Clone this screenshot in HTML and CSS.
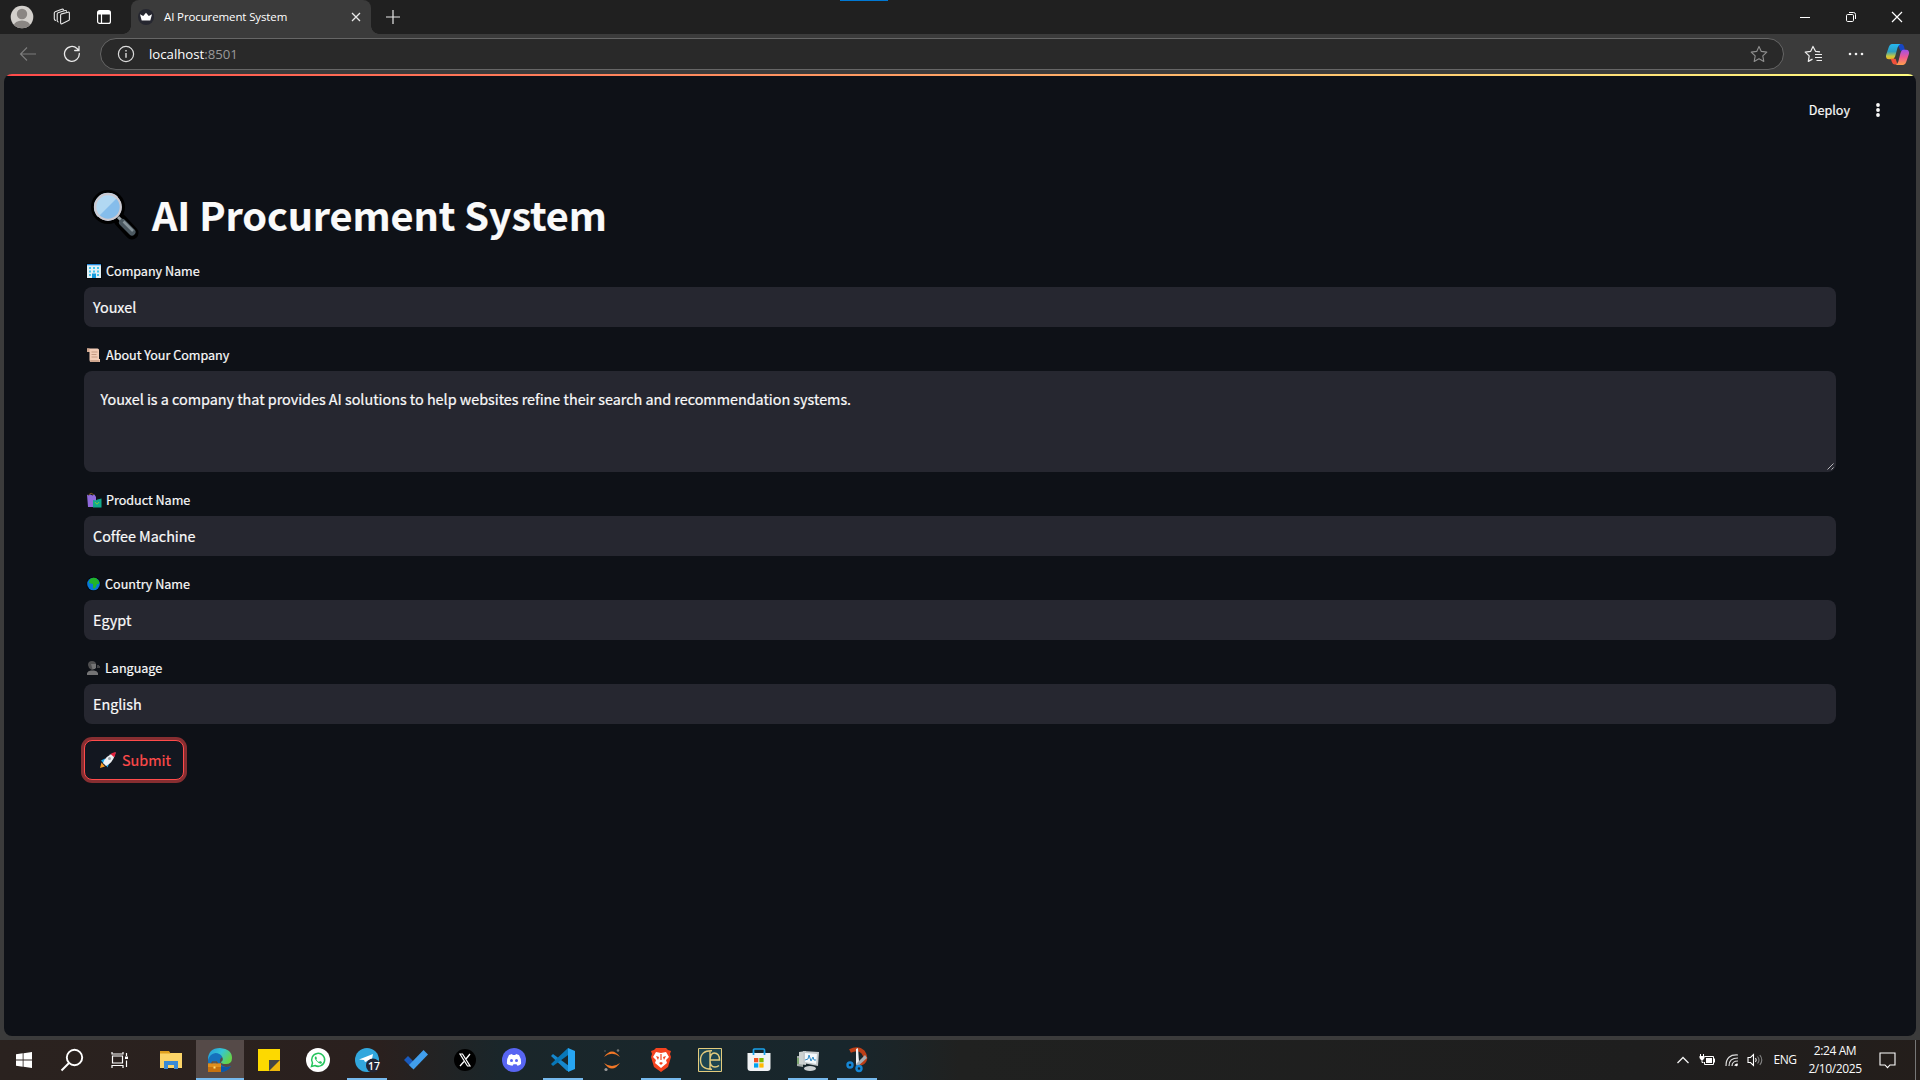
FILE: index.html
```html
<!DOCTYPE html>
<html lang="en">
<head>
<meta charset="utf-8">
<title>AI Procurement System</title>
<link rel="stylesheet" href="styles.css">
</head>
<body>
<div class="browser">
  <header class="tabbar">
    <div class="slot avatar"><svg width="24" height="24" viewBox="0 0 24 24"><defs><clipPath id="av"><circle cx="12" cy="12" r="11.3"/></clipPath></defs><g clip-path="url(#av)"><rect width="24" height="24" fill="#d3d0cc"/><circle cx="12" cy="9" r="5.2" fill="#8a8683"/><ellipse cx="12" cy="21" rx="8.2" ry="5.5" fill="#8a8683"/></g></svg></div>
    <div class="slot spaces"><svg width="18" height="18" viewBox="0 0 18 18" fill="none" stroke="#e6e6e6" stroke-width="1.1" stroke-linejoin="round" stroke-linecap="round"><path d="M7.600 7.200q0-1 1-1.300L15 4.200q1.400-.3 1.400 1v6q0 1-.9 1.300L9 15.800q-1.400.4-1.400-1z"/><path d="M5.300 14q-1.200-.2-1.100-1.400V6q0-1 .9-1.300L12 2.500q1.300-.3 1.500.8M2.600 12.400q-1.400-.2-1.300-1.500V5q0-1 .9-1.300l6.600-2.500q1.300-.4 1.700.5"/></svg></div>
    <div class="slot vtabs"><svg width="16" height="16" viewBox="0 0 16 16" fill="none"><rect x="1.600" y="1.600" width="12.800" height="12.800" rx="2" stroke="#fff" stroke-width="1.200"/><path d="M2 2h12v3.500H2z" fill="#fff"/><path d="M5.500 5v9" stroke="#fff" stroke-width="1.200"/></svg></div>
    <div class="tab">
      <svg class="favicon" width="16" height="16" viewBox="0 0 16 16"><circle cx="8" cy="8" r="8" fill="#262730"/><path d="M2 5.300 5.200 7 8 3.800 10.800 7 14 5.300 12.300 11.500H3.700z" fill="#fff"/></svg>
      <span class="tab-title">AI Procurement System</span>
      <svg class="tab-close" width="10" height="10" viewBox="0 0 10 10" stroke="#e8e8e8" stroke-width="1.300"><path d="m1 1 8 8M9 1 1 9"/></svg>
    </div>
    <svg class="newtab" width="16" height="16" viewBox="0 0 16 16" stroke="#e8e8e8" stroke-width="1.200"><path d="M8 1v14M1 8h14"/></svg>
    <div class="window-buttons">
      <svg width="12" height="12" viewBox="0 0 12 12" stroke="#fff"><path d="M1 6.500h10"/></svg>
      <svg width="12" height="12" viewBox="0 0 12 12" fill="none" stroke="#fff"><rect x="1.500" y="3.500" width="7" height="7" rx="1.200"/><path d="M4 1.500h4.500q2 0 2 2V8"/></svg>
      <svg width="12" height="12" viewBox="0 0 12 12" stroke="#fff" stroke-width="1.200"><path d="m1 1 10 10M11 1 1 11"/></svg>
    </div>
    <i class="top-accent"></i>
  </header>
  <nav class="toolbar">
    <svg class="back" width="18" height="16" viewBox="0 0 18 16" fill="none" stroke="#7d7d7d" stroke-width="1.100"><path d="M17 8H1.500M8 1.500 1.500 8 8 14.500"/></svg>
    <svg class="reload" width="18" height="18" viewBox="0 0 18 18" fill="none" stroke="#e8e8e8" stroke-width="1.300" stroke-linecap="round"><path d="M16.300 8.500a7.400 7.400 0 1 1-2.300-5L16 5.500M16 1.300v4.200h-4.300"/></svg>
    <div class="address">
      <svg width="18" height="18" viewBox="0 0 18 18" fill="none" stroke="#dcdcdc" stroke-width="1.200"><circle cx="9" cy="9" r="7.600"/><path d="M9 8v4.800M9 5v1.600" stroke-width="1.400"/></svg>
      <span class="url">localhost<span>:8501</span></span>
      <svg class="star" width="18" height="18" viewBox="0 0 18 18" fill="none" stroke="#8f8f8f" stroke-width="1.100" stroke-linejoin="round"><path d="m9 1.400 2.300 5 5.500.7-4 3.800 1 5.500L9 13.700l-4.800 2.700 1-5.500-4-3.800 5.500-.700z"/></svg>
    </div>
    <svg class="favorites" width="18" height="18" viewBox="0 0 18 18" fill="none" stroke="#eee" stroke-width="1.200" stroke-linejoin="round"><path d="M16 6.800 11.500 6.300 9 1.400 6.700 6.300l-5.500.8 4 3.800-.9 5.500 4.200-2.300M11 9.500h7M11 12.500h7M12.500 15.500h5.500"/></svg>
    <svg class="more" width="16" height="6" viewBox="0 0 16 6" fill="#f2f2f2"><circle cx="2" cy="3" r="1.300"/><circle cx="8" cy="3" r="1.300"/><circle cx="14" cy="3" r="1.300"/></svg>
    <svg class="copilot" width="23" height="21" viewBox="0 0 24 22"><defs><linearGradient id="c1" x1="0" y1="0" x2="0" y2="1"><stop stop-color="#25b7f0"/><stop offset=".5" stop-color="#2f9fc0"/><stop offset=".8" stop-color="#c8c840"/><stop offset="1" stop-color="#f0b020"/></linearGradient><linearGradient id="c2" x1="0" y1="0" x2="0" y2="1"><stop stop-color="#a050e8"/><stop offset=".5" stop-color="#f05a90"/><stop offset="1" stop-color="#ffa04a"/></linearGradient></defs><path d="M12 0h4q2 0 2.700 2.300L20 7h-5z" fill="#1746c4"/><path d="M6 0h9q-2 1-3 4L9.500 13Q8.500 16 6 16H3q-4 0-2.800-5L3 3q1-3 3-3z" fill="url(#c1)"/><path d="M5 15.500h5l2 6H9q-2 0-3-3z" fill="#f0503a"/><path d="M18 6h3q4 0 2.800 5L21 19q-1 3-3 3H10q2-1 3-4l2-8q1-4 3-4z" fill="url(#c2)"/></svg>
  </nav>

  <main class="page">
    <div class="app-header"><span>Deploy</span><svg width="6" height="16" viewBox="0 0 6 16" fill="#fafafa"><circle cx="3" cy="3" r="1.900"/><circle cx="3" cy="8" r="1.900"/><circle cx="3" cy="13" r="1.900"/></svg></div>
    <form class="form">
      <h1><svg width="48" height="50" viewBox="0 0 48 50"><g fill="none" stroke="#000" stroke-linecap="round"><circle cx="17" cy="17" r="12" stroke-width="10"/><path d="M29 30 41 43" stroke-width="13"/></g><path d="m27 27 5 5" stroke="#9aa5aa" stroke-width="3"/><path d="M31.500 32.500 41 42" stroke="#4b5860" stroke-width="7" stroke-linecap="round"/><path d="m32.500 31.500 9.500 9.500" stroke="#87949a" stroke-width="2.500"/><circle cx="17" cy="17" r="13.500" fill="#85bdeb"/><path d="M7 27A13.500 13.500 0 0 1 27 7z" fill="#b1d8f2"/><circle cx="17" cy="17" r="12.800" fill="none" stroke="#ccc9cf" stroke-width="2.200"/></svg><span>AI Procurement System</span></h1>

      <label class="field-label"><svg width="16" height="16" viewBox="0 0 16 16"><path d="M0 0h16v16H0z" fill="#07090c"/><path d="M1 1h14v14H1z" fill="#e2f0f5"/><path d="M1 1h14v1.300H1z" fill="#2489dc"/><g fill="#43c5ee"><path d="M3 4h2v2H3zM7 4h2v2H7zM11 4h2v2h-2zM3 7.500h2v2H3zM7 7.500h2v2H7zM11 7.500h2v2h-2zM3 11h2v2H3zM11 11h2v2h-2z"/></g><path d="M6 10.500h4V15H6z" fill="#159bdc"/></svg><span>Company Name</span></label>
      <div class="input">Youxel</div>

      <label class="field-label"><svg width="16" height="16" viewBox="0 0 16 16"><path d="M1 1.500h10.500q1.500 0 1.500 1.500v9h1v3H5q-1.500 0-1.500-2V5H1z" fill="#f3cdb7"/><path d="M1 1.500h2.500V5H1zM4 13h9.500v2H5z" fill="#cfa68e"/><path d="M5.500 5h6M5.500 7.500h5M5.500 10h6" stroke="#b98d76" stroke-width=".8"/></svg><span>About Your Company</span></label>
      <div class="input textarea">Youxel is a company that provides AI solutions to help websites refine their search and recommendation systems.<svg class="grip" width="7" height="7" viewBox="0 0 7 7" stroke="#c8c8cc" stroke-width=".9"><path d="M.5 6.500l6-6M4.500 6.500l2-2"/></svg></div>

      <label class="field-label"><svg width="16" height="16" viewBox="0 0 16 16"><path d="M3 4V2.500q2-2.500 4.500 0V5" fill="none" stroke="#80601e" stroke-width="1"/><path d="m1 2.500 1.500 1 2-1 2 1 2-1 1.500 2.500V15H2z" fill="#8f6adb"/><path d="m7 8 2.500.5 2-1 4-1v9H7z" fill="#10a98c"/><path d="M9 10q2 4 4 0" fill="none" stroke="#82c83c" stroke-width="1"/></svg><span>Product Name</span></label>
      <div class="input">Coffee Machine</div>

      <label class="field-label"><svg width="16" height="16" viewBox="0 0 16 16"><circle cx="7.500" cy="8" r="7.300" fill="#080a0e"/><circle cx="7.500" cy="8" r="6.300" fill="#0878d8"/><path d="M4 3q3-2 6-1l3 3v3l-2 0-1 3-2 2-1-1V8L3 7z" fill="#21b52a"/></svg><span class="tight">Country Name</span></label>
      <div class="input">Egypt</div>

      <label class="field-label"><svg width="16" height="16" viewBox="0 0 16 16"><path d="M2 5q0-4 4-4t4 3.500q0 4-2.500 5L6 10 3 8z" fill="#4f4f50"/><path d="M5 4h5v3.500L9 9H6.500z" fill="#747475"/><path d="M1 15v-2q1-2.500 4-2.500h3q3 0 4 2.500v2z" fill="#747475"/><path d="M12 5v3m1.500-1.500v1" stroke="#777" stroke-width="1"/></svg><span class="tight">Language</span></label>
      <div class="input">English</div>

      <button class="submit" type="button"><svg width="18" height="18" viewBox="0 0 18 18"><path d="m1 17 1.500-5.500L6 15.500z" fill="#f59a22"/><path d="m2 9.500 4-2 3 4-4 1.500zM8.500 16.500l2-5-1.500-2-3 3z" fill="#18a5e8"/><path d="M4 12Q6.500 4.500 16.500 1.500 14.500 11.500 7 15z" fill="#edf0f3"/><path d="M16.800 1q-.3 3-1.600 5.300L11.500 3Q13.800 1.500 16.800 1z" fill="#e4213d"/><circle cx="10.500" cy="7.500" r="1.500" fill="#9aa3ab"/></svg><span>Submit</span></button>
    </form>
  </main>
</div>

<footer class="taskbar">
  <div class="system-icons">
    <span><svg width="16" height="16" viewBox="0 0 16 16" fill="#fff"><path d="m0 2.300 6.700-1v6.300H0zM7.500 1.200 16 0v7.600H7.500zM0 8.400h6.700v6.300L0 13.700zM7.500 8.400H16V16l-8.500-1.200z"/></svg></span>
    <span><svg width="24" height="24" viewBox="0 0 24 24" fill="none" stroke="#fff" stroke-width="1.900"><circle cx="14.500" cy="9.500" r="7.700"/><path d="M9 15 1.500 22.500"/></svg></span>
    <span><svg width="18" height="18" viewBox="0 0 18 18" fill="none" stroke="#fff" stroke-width="1.200"><path d="M1.500 5h10v7h-10zM1 1v2h11V1M1 17v-2.500h11V17M15.500 2v3M15.500 9.500V16"/><path d="M14 5.500h3v2.500h-3z" fill="#fff" stroke="none"/></svg></span>
  </div>
  <div class="apps">
    <span><svg width="24" height="24" viewBox="0 0 24 24"><path d="M1 3h8l2 2H1z" fill="#d99a13"/><path d="M1 5h22v15H1z" fill="#fbd468"/><path d="M1 3h9l1.500 2.500H1z" fill="#dfa01f"/><path d="M5 21v-8h14v8h-4v-4H9v4z" fill="#3a8ad6"/></svg></span>
    <span class="active"><svg width="26" height="26" viewBox="0 0 26 26"><defs><linearGradient id="ed" x1="0" y1="0" x2="1" y2=".5"><stop stop-color="#2496dc"/><stop offset=".55" stop-color="#35c6d4"/><stop offset="1" stop-color="#64d34c"/></linearGradient></defs><path d="M1 13q0-8 8-8 7 0 8 5-4 0-4 4 0 5 6 6 3 0 5-1-4 6-11 6Q1 25 1 13z" fill="#1671bd"/><path d="M1 13Q1 1 13 1q12 1 12 10 0 6-6 6-5 0-5-2 3-1.500 1-5.500Q13 6 8.500 6 3 6.500 1 13z" fill="url(#ed)"/><path d="M11 16q4 6 13 3.500Q20 25 13 25z" fill="#0c56a6"/><path d="M1 16.500h13V25H1z" fill="#c7720f"/><path d="M1 16.500h13V20H1z" fill="#df8f1e"/><path d="M5 16.500V15h5v1.500" fill="none" stroke="#8a4708"/><path d="M6.500 19.500h2v2h-2z" fill="#ffe07a"/></svg></span>
    <span><svg width="24" height="24" viewBox="0 0 24 24"><path d="M1 1h22v11L12 23H1z" fill="#fdd900"/><path d="M12 12h11v11H12z" fill="#efb90c"/><path d="M12 12h11L12 23z" fill="#454545"/></svg></span>
    <span><svg width="26" height="26" viewBox="0 0 26 26"><circle cx="13" cy="13" r="12" fill="#fff"/><path d="m6.500 19.500 1-3.500a6.500 6.500 0 1 1 2.500 2.500z" fill="none" stroke="#25c45c" stroke-width="1.500"/><path d="M10.500 9.500q-2 1 1 4.500t5 2.500l.5-1.500-2-1-1 1q-2-.5-2.700-2.700l.7-1-1-2z" fill="#25c45c"/></svg></span>
    <span class="open"><svg width="26" height="26" viewBox="0 0 26 26"><circle cx="13" cy="13" r="12" fill="#32a7dd"/><path d="m5 12.500 14-5.500-1 5-7 3-1-2z" fill="#fff"/><circle cx="19" cy="18.500" r="7" fill="#232534"/></svg><b class="badge">17</b></span>
    <span><svg width="26" height="26" viewBox="0 0 26 26"><path d="m1 13 4-4 7 7-3 5z" fill="#195abd"/><path d="M20.500 3 25 7.500 10.500 22.500 6 18z" fill="#419fed"/></svg></span>
    <span><svg width="24" height="24" viewBox="0 0 24 24"><circle cx="12" cy="12" r="11" fill="#000"/><path d="M7 6h2.500L17 18h-2.500z" fill="none" stroke="#fff" stroke-width="1.200"/><path d="m17 6-4 5M11 13.500 7 18" stroke="#fff" stroke-width="1.300"/></svg></span>
    <span><svg width="26" height="26" viewBox="0 0 26 26"><circle cx="13" cy="13" r="12" fill="#5865f2"/><path d="m8 8 3-1 .7 1h2.600l.7-1 3 1q2.500 4 2 9-2 1.500-3.500 1.700l-1-1.500h-3l-1 1.500Q8 18.500 6 17q-.5-5 2-9z" fill="#fff"/><circle cx="10.500" cy="13.500" r="1.500" fill="#5865f2"/><circle cx="15.500" cy="13.500" r="1.500" fill="#5865f2"/></svg></span>
    <span class="open"><svg width="26" height="26" viewBox="0 0 26 26"><path d="m1 9 2-2 16 12v5l-2 0z" fill="#1687cd"/><path d="M1 17 18 1l1.500 6L3 19z" fill="#0877b8"/><path d="m18 1 7 3v18l-7 3z" fill="#27a5f2"/></svg></span>
    <span><svg width="24" height="24" viewBox="0 0 24 24"><path d="M4 9Q12-2 20 9 12 2.500 4 9zM4 15q8 11 16 0-8 6-16 0z" fill="#f37726"/><circle cx="18" cy="2.500" r="1.300" fill="#777"/><circle cx="6" cy="21.500" r="1.600" fill="#999"/><circle cx="5" cy="3" r=".8" fill="#666"/></svg></span>
    <span class="open"><svg width="26" height="26" viewBox="0 0 26 26"><path d="m8 1 10 0 2 2 3 1-1 3 1 3-3 10-7 5-7-5L3 10l1-3-1-3 3-1z" fill="#f4431f"/><path d="m8 5 5 1 5-1 3 5-3 3 1 3-6 5-6-5 1-3-3-3z" fill="#fff"/><path d="m8 9 3 1-1 3zM18 9l-3 1 1 3zM11 16l2-1 2 1-2 2zM12.400 7h1.200v6h-1.200z" fill="#f4431f"/></svg></span>
    <span><svg width="24" height="24" viewBox="0 0 24 24" fill="none" stroke="#e4cb7c"><path d="M.5.500h23v23H.5z" fill="#1e4550"/><path d="M14 2.800Q2.500 2.500 2.500 12T14 21.200M12 3v18M12 12h9.500q0-7-5.500-7-3.500 0-4 7 0 7 5 7 2.500 0 4-1.500" stroke-width="1.400"/></svg></span>
    <span><svg width="24" height="24" viewBox="0 0 24 24"><path d="M6.500 6V2q0-1 1-1h9q1 0 1 1v4" fill="none" stroke="#1aa2eb" stroke-width="1.700"/><path d="M.5 5h23v15q0 3-3 3h-17q-3 0-3-3z" fill="#f1f3f5"/><path d="M7 10h4.300v4.300H7z" fill="#f25022"/><path d="M12.300 10h4.300v4.300h-4.300z" fill="#7fba00"/><path d="M7 15.300h4.300v4.300H7z" fill="#00a4ef"/><path d="M12.300 15.300h4.300v4.300h-4.300z" fill="#ffb900"/><path d="M6.500 4.500v2.500M17.500 4.500v2.500" stroke="#1aa2eb" stroke-width="1.700"/></svg></span>
    <span class="open"><svg width="24" height="24" viewBox="0 0 24 24"><path d="M1 8h6v11l-6-1z" fill="#a3aaa8"/><path d="m3 4 7-1v14l-7-1z" fill="#cdd2d1"/><path d="m7 3 16 1-1 14-15-3z" fill="#c5cacc"/><path d="m9 5 12 1-1 10-11-2z" fill="#f4f9fc"/><path d="m9 12 3-1 1-4 2 6 2-4 1 3 2 0" fill="none" stroke="#308bc7"/><ellipse cx="14" cy="20.500" rx="6" ry="2.500" fill="#cbd0d2"/><path d="M2 10v6" stroke="#58a03b"/></svg></span>
    <span class="open"><svg width="24" height="26" viewBox="0 0 24 26"><path d="M5 4q8-4 13 1 5 7-1 11l-3 1" fill="none" stroke="#bd3e16" stroke-width="4"/><path d="m13 1 1 14-3 3V2z" fill="#edf0f3"/><path d="m20 8-9 9 1 3 10-9z" fill="#a6abb0"/><circle cx="5" cy="18" r="2.500" fill="none" stroke="#1687d6" stroke-width="2.400"/><circle cx="14" cy="21.500" r="2.500" fill="none" stroke="#1687d6" stroke-width="2.400"/></svg></span>
  </div>
  <div class="tray">
    <span class="t24"><svg width="14" height="8" viewBox="0 0 14 8" fill="none" stroke="#f2f2f2" stroke-width="1.300"><path d="m1.500 7 5.500-5.500L12.500 7"/></svg></span>
    <span class="t24"><svg width="17" height="12" viewBox="0 0 17 12" fill="none" stroke="#fff"><path d="M5.500 2.500h9v8h-9V8M15.500 4.500v4"/><path d="M7 4h6v5H7z" fill="#fff" stroke="none"/><path d="M1.500 0v2M4.500 0v2M3 6v2.500h1.500"/><path d="M.5 2h5v2L4 6H2L.5 4z" fill="#fff" stroke="none"/></svg></span>
    <span class="t25"><svg width="14" height="14" viewBox="0 0 14 14" fill="none" stroke="#ddd" stroke-width="1.200"><path d="M1 13Q1 1 13 2M4 13q0-8 9-8M7 13q0-5 6-5M10 13q0-2 3-2"/><circle cx="11.500" cy="12" r="1.200" fill="#fff" stroke="none"/></svg></span>
    <span class="t24"><svg class="speaker" width="17" height="14" viewBox="0 0 17 14" fill="none" stroke="#fff" stroke-width="1.100"><path d="M1 4.500h2.500L6.500 1.500v11L3.500 9.500H1z"/><path d="M8.500 5q1.500 2 0 4"/><path d="M10.500 3.500q3 3.500 0 7M12.800 2q4 5 0 10" stroke="#858585"/></svg></span>
    <span class="lang">ENG</span>
    <span class="clock"><span>2:24 AM</span><span>2/10/2025</span></span>
    <span class="notify"><svg width="17" height="17" viewBox="0 0 17 17" fill="none" stroke="#fff" stroke-width="1.100"><path d="M1 1h15v12h-5l-2.500 2.700L6 13H1z"/></svg></span>
    <i class="desktop-edge"></i>
  </div>
</footer>
</body>
</html>
```
FILE: styles.css
```css
* { box-sizing: border-box; }
body {
  margin: 0;
  width: 1920px;
  height: 1080px;
  overflow: hidden;
  display: flex;
  flex-direction: column;
  background: #3b3b3b;
  color: #fafafa;
  font-family: "Noto Sans CJK SC", "Noto Sans", sans-serif;
}
svg { display: block; flex: none; }
.browser { height: 1040px; display: flex; flex-direction: column; }

/* Tab strip */
.tabbar {
  position: relative;
  height: 34px;
  flex: none;
  display: flex;
  align-items: center;
  background: #202020;
  font-family: "Open Sans", sans-serif;
}
.slot { display: flex; justify-content: center; }
.avatar { width: 44px; }
.spaces { width: 36px; }
.vtabs { width: 48px; }
.tab {
  position: relative;
  width: 240px;
  height: 34px;
  margin-left: 3px;
  padding: 0 10px 0 7px;
  display: flex;
  align-items: center;
  background: #3b3b3b;
  border-radius: 8px 8px 0 0;
}
.tab::before, .tab::after {
  content: "";
  position: absolute;
  bottom: 0;
  width: 8px;
  height: 8px;
}
.tab::before { left: -8px; background: radial-gradient(circle at 0 0, #202020 7.5px, #3b3b3b 8px); }
.tab::after { right: -8px; background: radial-gradient(circle at 100% 0, #202020 7.5px, #3b3b3b 8px); }
.tab-title { margin-left: 10px; font-size: 11.5px; letter-spacing: -.12px; line-height: 16px; white-space: nowrap; color: #fff; }
.tab-close { margin-left: auto; }
.newtab { margin-left: 14px; }
.window-buttons { margin-left: auto; margin-right: 17px; display: flex; gap: 34px; }
.top-accent { position: absolute; left: 840px; top: 0; width: 48px; height: 1px; background: #0078d4; }

/* Address row */
.toolbar { height: 40px; flex: none; display: flex; align-items: center; padding: 0 11px 0 19px; }
.reload { margin-left: 26px; }
.address {
  width: 1684px;
  height: 32px;
  margin-left: 19px;
  padding: 0 15px 0 16px;
  display: flex;
  align-items: center;
  background: #292929;
  border: 1px solid #666;
  border-radius: 16px;
}
.url { margin-left: 14px; font-family: "Open Sans", sans-serif; font-size: 13.2px; line-height: 18px; color: #fff; }
.url span { color: #9a9a9a; }
.star { margin-left: auto; }
.favorites { margin-left: 20px; }
.more { margin-left: 26px; }
.copilot { margin-left: auto; }

/* Page */
.page {
  height: 962px;
  margin: 0 4px;
  border-radius: 8px;
  overflow: hidden;
  background: linear-gradient(90deg, #ff4b4b, #fffd80) top / 100% 2px no-repeat, #0e1117;
  -webkit-text-stroke: .2px;
}
.app-header {
  height: 60px;
  padding: 12px 35px 0 0;
  display: flex;
  justify-content: flex-end;
  align-items: center;
  gap: 25px;
  font-size: 12.6px;
  line-height: 20px;
}
.form { width: 1752px; margin-left: 80px; }
h1 {
  height: 53px;
  margin: 53px 0 21px;
  padding: 1px 0 0 7px;
  display: flex;
  align-items: center;
  gap: 13px;
  font-size: 39.6px;
  line-height: 53px;
  font-weight: 700;
  letter-spacing: -.08px;
  white-space: nowrap;
}
h1 svg { margin-top: 2px; }
h1 span { margin-top: -2px; }
.field-label {
  height: 20px;
  margin-bottom: 6px;
  padding-left: 2px;
  display: flex;
  align-items: center;
  gap: 4px;
  font-size: 12.6px;
  letter-spacing: -.02px;
  line-height: 20px;
}
.tight { margin-left: -1px; }
.input {
  height: 40px;
  margin-bottom: 18px;
  padding: 0 9px;
  display: flex;
  align-items: center;
  background: #262730;
  border-radius: 8px;
  font-size: 14.4px;
  letter-spacing: -.025px;
  line-height: 24px;
}
.textarea { position: relative; height: 101px; padding: 16px 16.5px; align-items: flex-start; }
.grip { position: absolute; right: 2px; bottom: 2px; }
.submit {
  width: 100px;
  height: 40px;
  margin-top: -2px;
  padding: 0 0 1px 14px;
  display: flex;
  align-items: center;
  gap: 5px;
  background: #131720;
  border: 1px solid #ff4b4b;
  border-radius: 8px;
  box-shadow: 0 0 0 3px rgba(255, 75, 75, .5);
  color: #ff4b4b;
  font-family: inherit;
  font-size: 14.4px;
  line-height: 24px;
}

/* Taskbar */
.taskbar {
  height: 40px;
  display: flex;
  background: linear-gradient(90deg, #2a221f 0, #2a201e 380px, #1a262a 500px, #18262c 850px, #202120 960px, #1e1e1e 1640px, #241e1b 1920px);
  font-family: "Open Sans", sans-serif;
}
.system-icons, .apps { display: flex; }
.system-icons span, .apps span { width: 48px; display: flex; align-items: center; justify-content: center; }
.apps { margin-left: 3px; gap: 1px; }
.apps span { position: relative; }
.apps .active { background: #554a48; border-bottom: 2px solid #76b9ed; padding-top: 2px; }
.apps .open { background: linear-gradient(#76b9ed, #76b9ed) bottom / 40px 2px no-repeat; }
.badge { position: absolute; left: 23px; top: 19px; width: 16px; text-align: center; font-size: 10.5px; line-height: 14px; font-weight: 600; color: #fff; }
.tray { margin-left: auto; display: flex; align-items: center; font-size: 12px; letter-spacing: -.4px; }
.tray > span { display: flex; justify-content: center; }
.t24 { width: 24px; }
.t25 { width: 25px; }
.speaker { margin-left: -2px; }
.lang { width: 34px; padding-bottom: 1px; }
.tray .clock { width: 66px; flex-direction: column; align-items: center; line-height: 18px; padding-bottom: 1px; }
.notify { width: 38px; }
.desktop-edge { width: 1px; height: 40px; margin: 0 4px 0 9px; background: #777; }
```
